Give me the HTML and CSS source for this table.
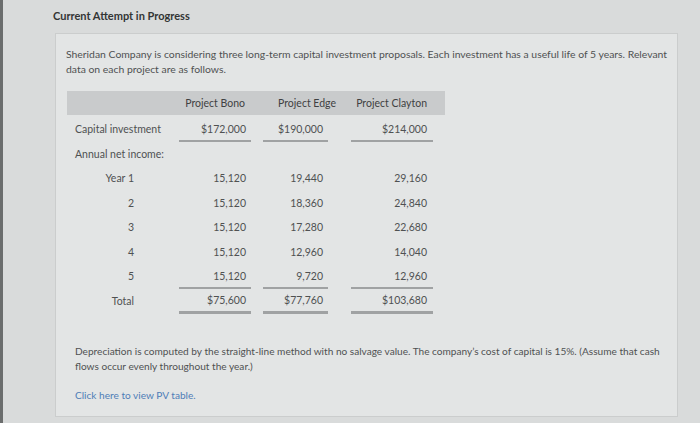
FILE: index.html
```html
<!DOCTYPE html>
<html lang="en">
<head>
  <meta charset="UTF-8" />
  <meta name="viewport" content="width=device-width, initial-scale=1" />
  <title>Current Attempt in Progress</title>
  <link rel="stylesheet" href="styles.css">
</head>
<body>
  <h1 class="attempt-title">Current Attempt in Progress</h1>

  <div class="question-card">
    <p class="intro">Sheridan Company is considering three long-term capital investment proposals. Each investment has a useful life of 5 years. Relevant data on each project are as follows.</p>

    <table class="project-table">
      <colgroup>
        <col class="col-label">
        <col class="col-bono">
        <col class="col-edge">
        <col class="col-clayton">
      </colgroup>
      <thead>
        <tr>
          <th></th>
          <th class="bono">Project Bono</th>
          <th class="edge">Project Edge</th>
          <th class="clayton">Project Clayton</th>
        </tr>
      </thead>
      <tbody>
        <tr class="row-capital">
          <td class="label"><div class="cell">Capital investment</div></td>
          <td class="bono"><div class="cell amount ruled">$172,000</div></td>
          <td class="edge"><div class="cell amount ruled">$190,000</div></td>
          <td class="clayton"><div class="cell amount ruled">$214,000</div></td>
        </tr>
        <tr>
          <td class="label"><div class="cell">Annual net income:</div></td>
          <td></td><td></td><td></td>
        </tr>
        <tr>
          <td class="label year"><div class="cell"><span>Year 1</span></div></td>
          <td class="bono"><div class="cell amount">15,120</div></td>
          <td class="edge"><div class="cell amount">19,440</div></td>
          <td class="clayton"><div class="cell amount">29,160</div></td>
        </tr>
        <tr>
          <td class="label year"><div class="cell"><span>2</span></div></td>
          <td class="bono"><div class="cell amount">15,120</div></td>
          <td class="edge"><div class="cell amount">18,360</div></td>
          <td class="clayton"><div class="cell amount">24,840</div></td>
        </tr>
        <tr>
          <td class="label year"><div class="cell"><span>3</span></div></td>
          <td class="bono"><div class="cell amount">15,120</div></td>
          <td class="edge"><div class="cell amount">17,280</div></td>
          <td class="clayton"><div class="cell amount">22,680</div></td>
        </tr>
        <tr>
          <td class="label year"><div class="cell"><span>4</span></div></td>
          <td class="bono"><div class="cell amount">15,120</div></td>
          <td class="edge"><div class="cell amount">12,960</div></td>
          <td class="clayton"><div class="cell amount">14,040</div></td>
        </tr>
        <tr>
          <td class="label year"><div class="cell"><span>5</span></div></td>
          <td class="bono"><div class="cell amount ruled">15,120</div></td>
          <td class="edge"><div class="cell amount ruled">9,720</div></td>
          <td class="clayton"><div class="cell amount ruled">12,960</div></td>
        </tr>
        <tr>
          <td class="label year"><div class="cell"><span>Total</span></div></td>
          <td class="bono"><div class="cell amount total">$75,600</div></td>
          <td class="edge"><div class="cell amount total">$77,760</div></td>
          <td class="clayton"><div class="cell amount total">$103,680</div></td>
        </tr>
      </tbody>
    </table>

    <p class="note">Depreciation is computed by the straight-line method with no salvage value. The company’s cost of capital is 15%. (Assume that cash flows occur evenly throughout the year.)</p>

    <a class="pv-link" href="#">Click here to view PV table.</a>
  </div>
</body>
</html>
```

FILE: styles.css
```css
html {
  background-color: #d9dbdb;
}
body {
  margin: 0;
  height: 423px;
  border-left: 3px solid #6b6d6d;
  font-family: Lato, "Open Sans", sans-serif;
  color: #4f5152;
  font-size: 10.4px;
}
.attempt-title {
  margin: 0;
  padding: 9px 0 0 50px;
  font-size: 11px;
  line-height: 14px;
  font-weight: 700;
  color: #333535;
}
.question-card {
  margin: 10px 22px 0 52px;
  height: 384px;
  padding: 13px 4px 0 10px;
  background-color: #e3e5e5;
  border: 1px solid #cbcdcd;
  box-sizing: border-box;
}
.intro {
  margin: 0;
  line-height: 15px;
}
.project-table {
  margin: 14px 0 0 1px;
  width: 378px;
  table-layout: fixed;
  border-collapse: separate;
  border-spacing: 0;
  font-size: 10.5px;
}
.col-label { width: 112px; }
.col-bono { width: 72px; }
.col-edge { width: 90px; }
.col-clayton { width: 104px; }
.project-table th {
  height: 24px;
  padding: 0;
  background-color: #c9cbcc;
  font-weight: 400;
  color: #3f4142;
  text-align: right;
  white-space: nowrap;
}
.project-table th.bono { padding-right: 6px; }
.project-table th.edge { padding-right: 5px; }
.project-table th.clayton { padding-right: 18px; }
.project-table td {
  height: 24.5px;
  padding: 0;
  vertical-align: bottom;
}
.cell {
  line-height: 22px;
  border-bottom: 2px solid transparent;
  white-space: nowrap;
}
td.label .cell {
  padding-left: 8px;
}
td.year span {
  display: inline-block;
  width: 59px;
  text-align: right;
}
.amount {
  text-align: right;
}
td.bono .amount {
  padding-right: 5px;
}
td.edge .amount {
  margin: 0 13px 0 12px;
  padding-right: 5px;
}
td.clayton .amount {
  margin: 0 12px 0 10px;
  padding-right: 6px;
}
.row-capital td {
  height: 27px;
}
.amount.ruled {
  border-bottom-color: #a0a2a3;
}
.amount.total {
  border-bottom: 3px solid #a0a2a3;
}
.note {
  margin: 30px 0 0 9px;
  font-size: 10.1px;
  line-height: 15px;
}
.pv-link {
  display: inline-block;
  margin: 15px 0 0 9px;
  font-size: 10.1px;
  color: #4f7db7;
  text-decoration: none;
}
```
